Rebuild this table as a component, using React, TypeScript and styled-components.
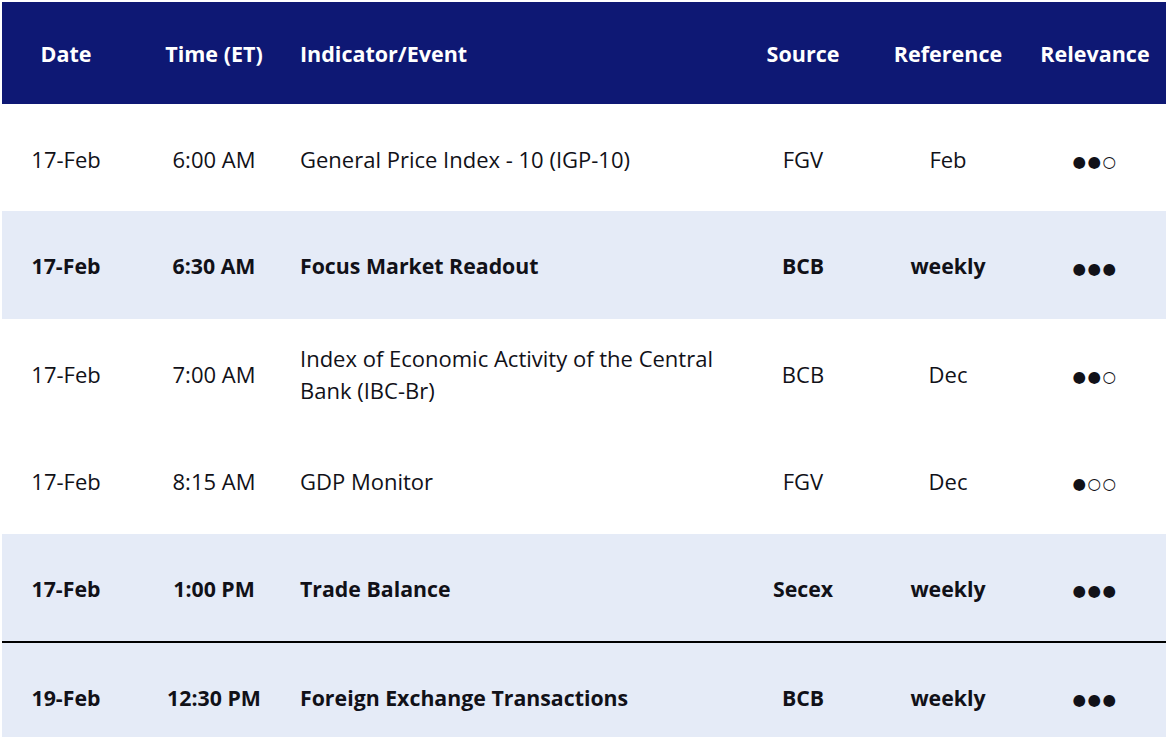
import React from "react";
import styled, { createGlobalStyle } from "styled-components";

const Global = createGlobalStyle`
  html, body { margin: 0; padding: 0; background: #ffffff; }
  body { font-family: "Open Sans", "Noto Sans", sans-serif; }
`;

const Page = styled.div`
  padding: 2px 2px 0 2px;
  width: 1164px;
`;

const COLS = "128px 168px 442px 126px 164px 136px";

const HeaderRow = styled.div`
  display: grid;
  grid-template-columns: ${COLS};
  height: 102px;
  align-items: center;
  background: #0e1874;
  color: #ffffff;
  font-weight: 700;
  font-size: 21.5px;
`;

const Row = styled.div<{ $shade: boolean; $height: number; $topRule?: boolean }>`
  display: grid;
  grid-template-columns: ${COLS};
  height: ${(p) => p.$height}px;
  align-items: center;
  background: ${(p) => (p.$shade ? "#e5ebf7" : "#ffffff")};
  color: #111118;
  font-size: ${(p) => (p.$shade ? 21.3 : 22)}px;
  font-weight: ${(p) => (p.$shade ? 700 : 400)};
  border-top: ${(p) => (p.$topRule ? "2px solid #000" : "none")};
  box-sizing: border-box;
`;

const Cell = styled.div<{ $align?: "left" | "center"; $pad?: number; $padRight?: number }>`
  text-align: ${(p) => p.$align ?? "center"};
  padding-left: ${(p) => p.$pad ?? 0}px;
  padding-right: ${(p) => p.$padRight ?? 0}px;
  line-height: 32px;
  transform: translateY(1px);
`;

const Dots = styled.span`
  font-family: "DejaVu Sans", sans-serif;
  font-size: 15.5px;
  letter-spacing: 1.5px;
  position: relative;
  left: -3px;
  top: 1px;
`;

type Item = {
  date: string;
  time: string;
  event: string;
  source: string;
  ref: string;
  rel: string;
  shade: boolean;
  h: number;
  rule?: boolean;
};

const items: Item[] = [
  { date: "17-Feb", time: "6:00 AM", event: "General Price Index - 10 (IGP-10)", source: "FGV", ref: "Feb", rel: "●●○", shade: false, h: 107 },
  { date: "17-Feb", time: "6:30 AM", event: "Focus Market Readout", source: "BCB", ref: "weekly", rel: "●●●", shade: true, h: 108 },
  { date: "17-Feb", time: "7:00 AM", event: "Index of Economic Activity of the Central Bank (IBC-Br)", source: "BCB", ref: "Dec", rel: "●●○", shade: false, h: 107 },
  { date: "17-Feb", time: "8:15 AM", event: "GDP Monitor", source: "FGV", ref: "Dec", rel: "●○○", shade: false, h: 108 },
  { date: "17-Feb", time: "1:00 PM", event: "Trade Balance", source: "Secex", ref: "weekly", rel: "●●●", shade: true, h: 107 },
  { date: "19-Feb", time: "12:30 PM", event: "Foreign Exchange Transactions", source: "BCB", ref: "weekly", rel: "●●●", shade: true, h: 109, rule: true },
];

export default function App() {
  return (
    <Page>
      <Global />
      <HeaderRow>
        <Cell>Date</Cell>
        <Cell>Time (ET)</Cell>
        <Cell $align="left" $pad={2}>Indicator/Event</Cell>
        <Cell>Source</Cell>
        <Cell>Reference</Cell>
        <Cell $padRight={6}>Relevance</Cell>
      </HeaderRow>
      {items.map((it, i) => (
        <Row key={i} $shade={it.shade} $height={it.h} $topRule={it.rule}>
          <Cell>{it.date}</Cell>
          <Cell>{it.time}</Cell>
          <Cell $align="left" $pad={2} $padRight={20}>{it.event}</Cell>
          <Cell>{it.source}</Cell>
          <Cell>{it.ref}</Cell>
          <Cell><Dots>{it.rel}</Dots></Cell>
        </Row>
      ))}
    </Page>
  );
}
